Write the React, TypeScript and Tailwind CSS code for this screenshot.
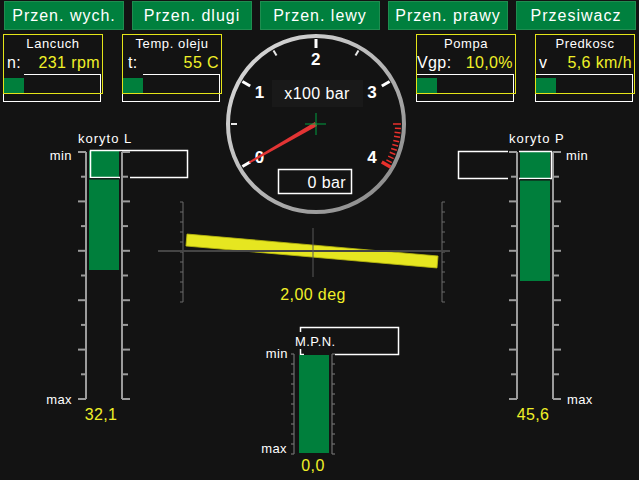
import React from 'react'

const BG = '#131313'
const GREEN = '#007f3c'
const YELLOW = '#f0f028'

const range = (n: number) => Array.from({ length: n }, (_, i) => i)

// point on a dial, angle in degrees clockwise from 12 o'clock
const polar = (cx: number, cy: number, r: number, deg: number) => {
  const a = (deg * Math.PI) / 180
  return [cx + r * Math.sin(a), cy - r * Math.cos(a)]
}

// vertical scale with alternating long / short ticks
const Scale = ({ x, y0, step, n, dir, long, short, stroke, w }: {
  x: number; y0: number; step: number; n: number; dir: 1 | -1
  long: number; short: number; stroke: string; w: number
}) => (
  <g stroke={stroke} strokeWidth={w}>
    <line x1={x} y1={y0} x2={x} y2={y0 + step * n} />
    {range(n + 1).map(i => (
      <line key={i} x1={x} y1={y0 + step * i} x2={x + dir * (i % 2 ? short : long)} y2={y0 + step * i} />
    ))}
  </g>
)

const buttons = ['Przen. wych.', 'Przen. dlugi', 'Przen. lewy', 'Przen. prawy', 'Przesiwacz']

const Readout = ({ title, label, value, labelPad, cut }: {
  title: string; label: string; value: string; labelPad: string; cut?: boolean
}) => (
  <div className='relative h-[68px] w-[100px]'>
    <div className='pt-[2px] text-center text-[13px] leading-[15px] tracking-[0.6px] text-white'>{title}</div>
    <div className='mt-[3px] flex justify-between text-[16px] leading-[18px]'>
      <span className={`${labelPad} text-white`}>{label}</span>
      <span className='pr-[3px] text-[#f0f028]'>{value}</span>
    </div>
    <div className='relative mt-[2px] h-[28px] w-[98px] border border-white'>
      {cut && <span className='absolute -left-px -top-px h-px w-[21px] bg-[#131313]' />}
      <div className='mt-[3px] h-[15px] w-[20px] bg-[#007f3c]' />
    </div>
    <div className='pointer-events-none absolute left-0 top-0 h-[60px] w-[100px] border border-[#e4e418]' />
  </div>
)

const Gauge = () => {
  const c = 90
  const tick = (deg: number, r1: number, r2: number) => {
    const [x1, y1] = polar(c, c, r1, deg)
    const [x2, y2] = polar(c, c, r2, deg)
    return { x1, y1, x2, y2 }
  }
  const [tx, ty] = polar(c, c, 77, -120)
  const [bx1, by1] = polar(c, c, 2.2, -30)
  const [bx2, by2] = polar(c, c, 2.2, 150)
  const [tx1, ty1] = polar(tx, ty, 1, -30)
  const [tx2, ty2] = polar(tx, ty, 1, 150)
  const labels = [
    { t: '0', deg: -120 },
    { t: '1', deg: -60 },
    { t: '2', deg: 0 },
    { t: '3', deg: 60 },
    { t: '4', deg: 120 },
  ]
  return (
    <svg width={180} height={168} viewBox='0 0 180 168' className='overflow-visible'>
      <defs>
        <linearGradient id='rim' x1='0' y1='0' x2='1' y2='1'>
          <stop offset='0' stopColor='#dcdcdc' />
          <stop offset='0.5' stopColor='#b8b8b8' />
          <stop offset='1' stopColor='#808080' />
        </linearGradient>
      </defs>
      <circle cx={c} cy={c} r={88} fill='none' stroke='url(#rim)' strokeWidth={4} />

      {[-120, -60, 0, 60].map(d => (
        <line key={d} {...tick(d, 76, 85)} stroke='#ffffff' strokeWidth={3} />
      ))}
      {[-90, -30, 30].map(d => (
        <line key={d} {...tick(d, 79, 85)} stroke='#e8e8e8' strokeWidth={2} />
      ))}
      {range(10).map(i => (
        <line key={i} {...tick(90 + i * 3, i === 0 ? 77 : 79, 85)} stroke='#e8302c' strokeWidth={1.5} />
      ))}
      <line {...tick(120, 76, 86)} stroke='#e8302c' strokeWidth={3.5} />

      {labels.map(l => {
        const [x, y] = polar(c, c, 65, l.deg)
        return (
          <text key={l.t} x={x} y={y + 6} textAnchor='middle' fontSize={17} fontWeight={700} fill='#ffffff'>
            {l.t}
          </text>
        )
      })}

      <rect x={46} y={46} width={91} height={27} fill='#191919' />
      <text x={91} y={65} textAnchor='middle' fontSize={16} fill='#ffffff'>x100 bar</text>

      <polygon points={`${bx1},${by1} ${bx2},${by2} ${tx2},${ty2} ${tx1},${ty1}`} fill='#e23434' />

      <g stroke='#00a040' strokeWidth={1}>
        <line x1={79} y1={90} x2={100} y2={90} />
        <line x1={90} y1={79} x2={90} y2={101} />
      </g>

      <rect x={52.5} y={135.5} width={73} height={24} fill={BG} stroke='#ffffff' strokeWidth={1.5} />
      <text x={120} y={154} textAnchor='end' fontSize={16} fill='#ffffff'>0 bar</text>
    </svg>
  )
}

const Tilt = () => (
  <svg width={296} height={104} viewBox='0 0 296 104' className='ml-[-70px] overflow-visible'>
    <Scale x={27} y0={0} step={10} n={10} dir={-1} long={3} short={3} stroke='#6a6a6a' w={1} />
    <Scale x={286} y0={0} step={10} n={10} dir={1} long={3} short={3} stroke='#6a6a6a' w={1} />
    <g transform='translate(156 49) rotate(5)'>
      <rect x={-126} y={-6} width={252} height={12} fill='#e6e620' stroke='#b8b810' strokeWidth={0.8} />
    </g>
    <line x1={2} y1={49} x2={294} y2={49} stroke='#454545' strokeWidth={2} />
    <line x1={157} y1={26} x2={157} y2={75} stroke='#585858' strokeWidth={1} />
    <text x={157} y={98} textAnchor='middle' fontSize={16} fill={YELLOW}>2,00 deg</text>
  </svg>
)

const Mpn = () => (
  <svg width={142} height={152} viewBox='0 0 142 152' className='ml-[34px] mt-[18px]'>
    <rect x={40.5} y={3.5} width={98} height={27} fill='none' stroke='#ffffff' strokeWidth={1.5} />
    <rect x={34} y={8} width={40} height={17} fill={BG} />
    <rect x={44} y={29} width={31} height={3} fill={BG} />
    <text x={35} y={22} fontSize={13} fill='#ffffff'>M.P.N.</text>
    <rect x={39} y={31} width={30} height={98} fill={GREEN} />
    <Scale x={34} y0={30} step={10} n={10} dir={-1} long={3} short={3} stroke='#707070' w={1.2} />
    <Scale x={72} y0={30} step={10} n={10} dir={1} long={3} short={3} stroke='#707070' w={1.2} />
    <text x={28} y={34} textAnchor='end' fontSize={13} fill='#ffffff'>min</text>
    <text x={27} y={129} textAnchor='end' fontSize={13} fill='#ffffff'>max</text>
    <text x={53} y={147} textAnchor='middle' fontSize={16} fill={YELLOW}>0,0</text>
  </svg>
)

const TroughLeft = () => (
  <svg width={226} height={296} viewBox='0 0 226 296' className='mt-[26px]'>
    <text x={78} y={15} fontSize={13} fill='#ffffff' className='tracking-[1px]'>koryto L</text>
    <rect x={89} y={23} width={30} height={119} fill={GREEN} />
    <rect x={90.5} y={22.5} width={97} height={27} fill='none' stroke='#ffffff' strokeWidth={1.5} />
    <line x1={89} y1={50.8} x2={119} y2={50.8} stroke={BG} strokeWidth={1.5} />
    <rect x={120} y={48} width={10} height={3} fill={BG} />
    <Scale x={86} y0={24} step={24.7} n={10} dir={-1} long={8} short={5} stroke='#9c9c9c' w={2} />
    <Scale x={122} y0={24} step={24.7} n={10} dir={1} long={8} short={6} stroke='#9c9c9c' w={2} />
    <text x={72} y={32} textAnchor='end' fontSize={13} fill='#ffffff'>min</text>
    <text x={72} y={276} textAnchor='end' fontSize={13} fill='#ffffff'>max</text>
    <text x={101} y={292} textAnchor='middle' fontSize={16} fill={YELLOW}>32,1</text>
  </svg>
)

const TroughRight = () => (
  <svg width={233} height={296} viewBox='0 0 233 296' className='mt-[26px]'>
    <text x={103} y={15} fontSize={13} fill='#ffffff' className='tracking-[1px]'>koryto P</text>
    <rect x={114} y={23} width={30} height={130} fill={GREEN} />
    <rect x={52.5} y={23.5} width={93} height={27} fill='none' stroke='#ffffff' strokeWidth={1.5} />
    <line x1={114} y1={51.8} x2={144} y2={51.8} stroke={BG} strokeWidth={1.5} />
    <rect x={102} y={22} width={11} height={3} fill={BG} />
    <rect x={102} y={49} width={11} height={3} fill={BG} />
    <Scale x={111} y0={24} step={24.7} n={10} dir={-1} long={8} short={6} stroke='#9c9c9c' w={2} />
    <Scale x={147} y0={24} step={24.7} n={10} dir={1} long={8} short={6} stroke='#9c9c9c' w={2} />
    <text x={160} y={32} fontSize={13} fill='#ffffff'>min</text>
    <text x={161} y={276} fontSize={13} fill='#ffffff'>max</text>
    <text x={127} y={292} textAnchor='middle' fontSize={16} fill={YELLOW}>45,6</text>
  </svg>
)

const App = () => {
  return (
    <div className="h-[480px] w-[639px] overflow-hidden bg-[#131313] pt-px font-['Liberation_Sans',Arial,sans-serif] tracking-[0.4px]">
      {/* function keys */}
      <div className='flex gap-2 pl-1'>
        {buttons.map(b => (
          <div key={b} className='flex h-[29px] w-[120px] items-center justify-center border border-[#1f8d50] bg-[#00803e] text-[16px] tracking-[1px] text-white'>
            {b}
          </div>
        ))}
      </div>

      <div className='mt-1 flex'>
        {/* left column */}
        <div className='flex w-[226px] flex-col'>
          <div className='flex gap-[19px] pl-[3px]'>
            <Readout title='Lancuch' label='n:' value='231 rpm' labelPad='pl-[4px]' cut />
            <Readout title='Temp. oleju' label='t:' value='55 C' labelPad='pl-[6px]' cut />
          </div>
          <TroughLeft />
        </div>

        {/* pressure dial, tilt and M.P.N. */}
        <div className='flex w-[180px] flex-col'>
          <Gauge />
          <Tilt />
          <Mpn />
        </div>

        {/* right column */}
        <div className='flex flex-1 flex-col'>
          <div className='flex gap-[19px] pl-[10px]'>
            <Readout title='Pompa' label='Vgp:' value='10,0%' labelPad='pl-[1px]' />
            <Readout title='Predkosc' label='v' value='5,6 km/h' labelPad='pl-[4px]' />
          </div>
          <TroughRight />
        </div>
      </div>
    </div>
  )
}

export default App
